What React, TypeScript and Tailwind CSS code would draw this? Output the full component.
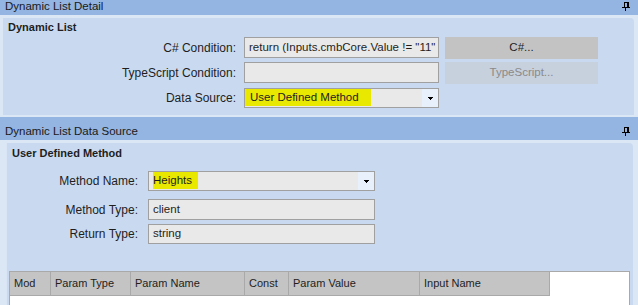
import React from "react";

function Pin() {
  return (
    <svg width="8" height="9" viewBox="0 0 8 9" shapeRendering="crispEdges" className="absolute right-[8px] top-[10px]">
      <rect x="2" y="0" width="4" height="1" fill="#000" />
      <rect x="2" y="0" width="1" height="5" fill="#000" />
      <rect x="5" y="0" width="2" height="5" fill="#000" />
      <rect x="0" y="5" width="8" height="1" fill="#000" />
      <rect x="3" y="6" width="1" height="3" fill="#000" />
    </svg>
  );
}

function Header({ title }: { title: string }) {
  return (
    <div className="relative h-[23px] bg-[#94b4e1] pl-[5px] pt-[8px] text-[11.5px] leading-[13px] text-[#1a1a1a]">
      {title}
      <Pin />
    </div>
  );
}

function Arrow() {
  return (
    <svg width="5" height="3" viewBox="0 0 5 3" shapeRendering="crispEdges">
      <path d="M0 0h5v1H4v1H3v1H2V2H1V1H0z" fill="#000" />
    </svg>
  );
}

function TextBox({ value, w }: { value: string; w: string }) {
  return (
    <div className={`${w} h-full border border-[#a0a0a0] bg-[#e9e9e9] flex items-center pl-[4px] overflow-hidden whitespace-nowrap text-[11.5px] text-[#1e1e1e]`}>
      {value}
    </div>
  );
}

export default function App() {
  return (
    <div className="w-[638px] h-[305px] overflow-hidden bg-[#dce7f5] font-['Liberation_Sans',Arial,sans-serif] text-[#1e1e1e]">
      <div className="-mt-[8px]">
        <Header title="Dynamic List Detail" />
        <div className="pt-[3px] pl-[3px] pr-[4px] pb-[2px]">
          <div className="h-[97px] bg-[#c9daf0] rounded-tr-[4px] pt-[3px]">
            <div className="pl-[5px] text-[11px] leading-[13px] font-bold">Dynamic List</div>
            <div className="mt-[3px] flex items-center h-[21px]">
              <div className="w-[233px] text-right text-[12px]">C# Condition:</div>
              <div className="ml-[8px] h-full">
                <TextBox w="w-[195px]" value={'return (Inputs.cmbCore.Value != "11"'} />
              </div>
              <div className="ml-[6px] w-[153px] h-[22px] bg-[#c3c3c3] flex items-center justify-center text-[11.5px] text-[#1e1e1e]">
                C#...
              </div>
            </div>
            <div className="mt-[4px] flex items-center h-[21px]">
              <div className="w-[233px] text-right text-[12px]">TypeScript Condition:</div>
              <div className="ml-[8px] h-full">
                <TextBox w="w-[195px]" value="" />
              </div>
              <div className="ml-[6px] w-[153px] h-[22px] bg-[#c7d0dd] flex items-center justify-center text-[11.5px] text-[#8a8a8a]">
                TypeScript...
              </div>
            </div>
            <div className="mt-[5px] flex items-center h-[20px]">
              <div className="w-[233px] text-right text-[12px]">Data Source:</div>
              <div className="ml-[8px] h-full w-[195px] border border-[#a0a0a0] bg-[#e9e9e9] flex">
                <div className="flex-1 flex items-start">
                  <span className="h-[17px] bg-[#e8e800] pl-[5px] pr-[12px] flex items-center text-[11.5px] whitespace-nowrap">
                    User Defined Method
                  </span>
                </div>
                <div className="w-[16px] h-full bg-[#e8f1fb] flex items-center justify-center">
                  <Arrow />
                </div>
              </div>
            </div>
          </div>
        </div>
        <Header title="Dynamic List Data Source" />
        <div className="pt-[3px] pl-[6px] pr-[5px]">
          <div className="h-[200px] bg-[#c9daf0] rounded-tr-[4px] border-l border-[#d9e5f4] pt-[4px]">
            <div className="pl-[5px] text-[11px] leading-[13px] font-bold">User Defined Method</div>
            <div className="mt-[11px] flex items-center h-[20px]">
              <div className="w-[131px] text-right text-[12px]">Method Name:</div>
              <div className="ml-[10px] h-full w-[227px] border border-[#a0a0a0] bg-[#e9e9e9] flex">
                <div className="flex-1 flex items-start pl-[4px]">
                  <span className="h-[17px] bg-[#e8e800] pr-[6px] flex items-center text-[11.5px] whitespace-nowrap">
                    Heights
                  </span>
                </div>
                <div className="w-[16px] h-full bg-[#e8f1fb] flex items-center justify-center">
                  <Arrow />
                </div>
              </div>
            </div>
            <div className="mt-[8px] flex items-center h-[21px]">
              <div className="w-[131px] text-right text-[12px]">Method Type:</div>
              <div className="ml-[10px] h-full">
                <TextBox w="w-[227px]" value="client" />
              </div>
            </div>
            <div className="mt-[4px] flex items-center h-[20px]">
              <div className="w-[131px] text-right text-[12px]">Return Type:</div>
              <div className="ml-[10px] h-full">
                <TextBox w="w-[227px]" value="string" />
              </div>
            </div>
            <div className="mt-[27px] ml-[2px] mr-[3px] h-[60px] bg-white border-l border-t border-r border-[#a9a9a9]">
              <div className="flex h-[24px] text-[11px] text-[#1e1e1e]">
                {[
                  ["Mod", "w-[41px]"],
                  ["Param Type", "w-[80px]"],
                  ["Param Name", "w-[114px]"],
                  ["Const", "w-[44px]"],
                  ["Param Value", "w-[131px]"],
                  ["Input Name", "w-[130px]"],
                ].map(([t, w]) => (
                  <div
                    key={t}
                    className={`${w} h-full bg-[#c4c4c4] border-r border-b border-[#a9a9a9] flex items-center pl-[4px] whitespace-nowrap`}
                  >
                    {t}
                  </div>
                ))}
              </div>
            </div>
          </div>
        </div>
      </div>
    </div>
  );
}
